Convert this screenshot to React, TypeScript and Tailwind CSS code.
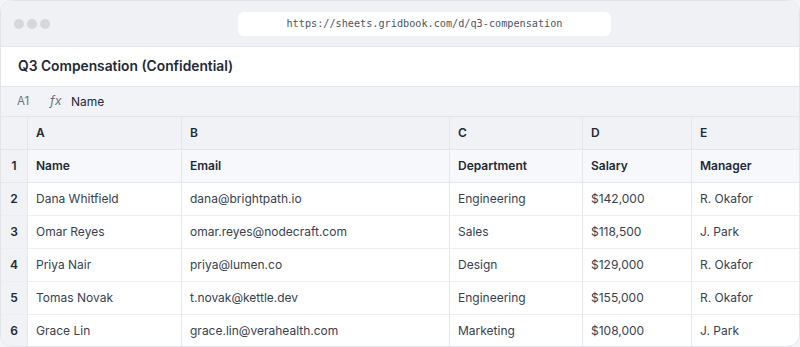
import React from "react";

interface Row {
  name: string;
  email: string;
  dept: string;
  salary: string;
  manager: string;
}

const rows: Row[] = [
  { name: "Dana Whitfield", email: "dana@brightpath.io", dept: "Engineering", salary: "$142,000", manager: "R. Okafor" },
  { name: "Omar Reyes", email: "omar.reyes@nodecraft.com", dept: "Sales", salary: "$118,500", manager: "J. Park" },
  { name: "Priya Nair", email: "priya@lumen.co", dept: "Design", salary: "$129,000", manager: "R. Okafor" },
  { name: "Tomas Novak", email: "t.novak@kettle.dev", dept: "Engineering", salary: "$155,000", manager: "R. Okafor" },
  { name: "Grace Lin", email: "grace.lin@verahealth.com", dept: "Marketing", salary: "$108,000", manager: "J. Park" },
];

const cols = ["A", "B", "C", "D", "E"];
const gridCols = "grid grid-cols-[26px_154px_268px_133px_109px_1fr]";
const cell = "flex items-center pl-2 border-l border-[#e5e7eb]";

const App: React.FC = () => {
  return (
    <div className="w-[800px] h-[347px] bg-[#f3f4f6] font-['Inter',sans-serif]">
      <div className="h-[347px] rounded-[12px] border border-[#e2e4e8] overflow-hidden flex flex-col bg-white">
        {/* title bar */}
        <div className="h-[46px] shrink-0 bg-[#eff1f4] border-b border-[#e3e5e9] flex items-center pl-[13px]">
          <div className="flex gap-[3px]">
            <span className="w-[10px] h-[10px] rounded-full bg-[#d4d7dc]" />
            <span className="w-[10px] h-[10px] rounded-full bg-[#d4d7dc]" />
            <span className="w-[10px] h-[10px] rounded-full bg-[#d4d7dc]" />
          </div>
          <div className="ml-[188px] w-[373px] h-[24px] rounded-md bg-white flex items-center justify-center font-['DejaVu_Sans_Mono',monospace] text-[10.2px] text-[#4b5563]">
            https://sheets.gridbook.com/d/q3-compensation
          </div>
        </div>

        {/* sheet title */}
        <div className="h-[40px] shrink-0 flex items-center px-[17px] border-b border-[#e3e5e9] text-[13.8px] font-semibold text-[#1f2937]">
          Q3 Compensation (Confidential)
        </div>

        {/* formula bar */}
        <div className="h-[30px] shrink-0 flex items-center bg-[#f1f3f6] border-b border-[#e3e5e9] text-[12px]">
          <span className="w-[49px] pl-[16px] text-[11.5px] text-[#6b7280]">A1</span>
          <span className="w-[21px] italic text-[12.5px] text-[#6b7280]">fx</span>
          <span className="text-[#1f2937]">Name</span>
        </div>

        {/* grid */}
        <div className="flex-1 text-[12px]">
          <div className={`${gridCols} h-[33px] bg-[#f1f2f5] border-b border-[#e3e5e9] font-semibold text-[#1f2937]`}>
            <div />
            {cols.map((c) => (
              <div key={c} className={cell}>{c}</div>
            ))}
          </div>
          <div className={`${gridCols} h-[33px] bg-[#f6f8fc] border-b border-[#e5e7eb] font-semibold text-[#1f2937]`}>
            <div className="flex items-center justify-center bg-[#f1f2f5]">1</div>
            <div className={cell}>Name</div>
            <div className={cell}>Email</div>
            <div className={cell}>Department</div>
            <div className={cell}>Salary</div>
            <div className={cell}>Manager</div>
          </div>
          {rows.map((r, i) => (
            <div key={r.email} className={`${gridCols} h-[33px] border-b border-[#eceef1] text-[#374151]`}>
              <div className="flex items-center justify-center bg-[#f1f2f5] font-semibold text-[#1f2937]">{i + 2}</div>
              <div className={cell}>{r.name}</div>
              <div className={cell}>{r.email}</div>
              <div className={cell}>{r.dept}</div>
              <div className={cell}>{r.salary}</div>
              <div className={cell}>{r.manager}</div>
            </div>
          ))}
        </div>
      </div>
    </div>
  );
};

export default App;
